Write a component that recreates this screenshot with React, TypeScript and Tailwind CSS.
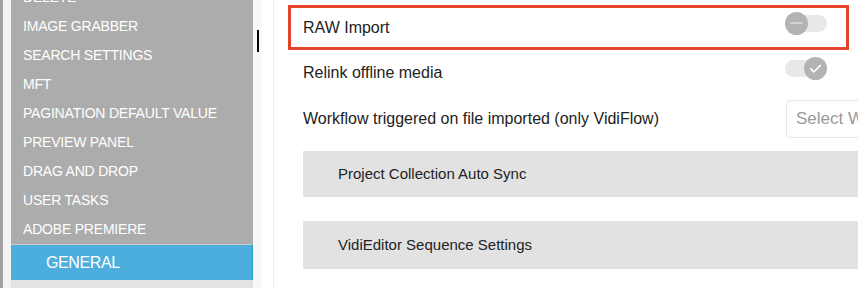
import React from "react";

const items = [
  "DELETE",
  "IMAGE GRABBER",
  "SEARCH SETTINGS",
  "MFT",
  "PAGINATION DEFAULT VALUE",
  "PREVIEW PANEL",
  "DRAG AND DROP",
  "USER TASKS",
  "ADOBE PREMIERE",
];

function ToggleOff() {
  return (
    <div className="relative w-[42px] h-[23px] shrink-0">
      <div className="absolute left-[4px] right-0 top-[3px] h-[17px] rounded-full bg-[#e8e8e8]" />
      <div className="absolute left-0 top-0 w-[23px] h-[23px] rounded-full bg-[#b3b3b3] flex items-center justify-center">
        <div className="w-[13px] h-[2px] rounded bg-[#d2d2d2]" />
      </div>
    </div>
  );
}

function ToggleOn() {
  return (
    <div className="relative w-[42px] h-[23px] shrink-0">
      <div className="absolute left-0 right-[4px] top-[3px] h-[17px] rounded-full bg-[#e8e8e8]" />
      <div className="absolute right-0 top-0 w-[23px] h-[23px] rounded-full bg-[#b3b3b3] flex items-center justify-center">
        <svg width="15" height="15" viewBox="0 0 16 16" fill="none">
          <path d="M3 8.5l3.2 3.2L13 4.8" stroke="#ffffff" strokeWidth="1.8" strokeLinecap="round" strokeLinejoin="round" />
        </svg>
      </div>
    </div>
  );
}

export default function App() {
  return (
    <div
      className="w-[858px] h-[288px] overflow-hidden flex bg-white"
      style={{ fontFamily: '"Liberation Sans", Arial, sans-serif' }}
    >
      <div className="w-[3px] shrink-0 bg-[#a2a2a2]" />
      <div className="w-[8px] shrink-0 bg-[#f3f3f3]" />
      <div className="w-[242px] shrink-0 flex flex-col bg-[#e3e3e3]">
        <div className="bg-[#acacac] flex flex-col -mt-[17px]">
          {items.map((t) => (
            <div key={t} className="h-[29px] flex items-center pl-[12px] text-white text-[14px] tracking-[-0.2px]">
              {t}
            </div>
          ))}
        </div>
        <div className="h-[36px] border-t border-[#c9c9c9] bg-[#4caedd] border-r border-r-[#2a9fd4] flex items-center pl-[35px] text-white text-[16px] tracking-[-0.4px]">
          GENERAL
        </div>
      </div>
      <div className="w-[9px] shrink-0 bg-[#f8f8f8] relative">
        <div className="absolute left-[4px] top-[30px] w-[2px] h-[22px] bg-black" />
      </div>
      <div className="w-[12px] shrink-0 bg-white border-r border-[#ebebeb]" />
      <div className="flex-1 overflow-hidden">
        <div className="w-[700px] pl-[14px] pt-[5px] flex flex-col">
          <div className="w-[561px] h-[45px] border-[3px] border-[#e6432d] flex items-center justify-between pl-[12px] pr-[19px]">
            <span className="text-[16px] text-[#222]">RAW Import</span>
            <div className="mb-[9px]">
              <ToggleOff />
            </div>
          </div>
          <div className="w-[561px] h-[45px] flex items-center justify-between pl-[15px] pr-[22px]">
            <span className="text-[16px] text-[#222]">Relink offline media</span>
            <div className="mb-[8px]">
              <ToggleOn />
            </div>
          </div>
          <div className="h-[47px] flex items-center pl-[15px]">
            <span className="w-[483px] shrink-0 text-[16px] text-[#222]">Workflow triggered on file imported (only VidiFlow)</span>
            <div className="w-[200px] h-[38px] border border-[#e6e6e6] rounded-[4px] flex items-center pl-[9px] text-[17px] text-[#9a9a9a]">
              Select Workflow
            </div>
          </div>
          <div className="ml-[15px] mt-[9px] h-[46px] bg-[#e2e2e2] flex items-center pl-[35px] text-[15px] text-[#222]">
            Project Collection Auto Sync
          </div>
          <div className="ml-[15px] mt-[24px] h-[48px] bg-[#e2e2e2] flex items-center pl-[35px] text-[15px] text-[#222]">
            VidiEditor Sequence Settings
          </div>
        </div>
      </div>
    </div>
  );
}
